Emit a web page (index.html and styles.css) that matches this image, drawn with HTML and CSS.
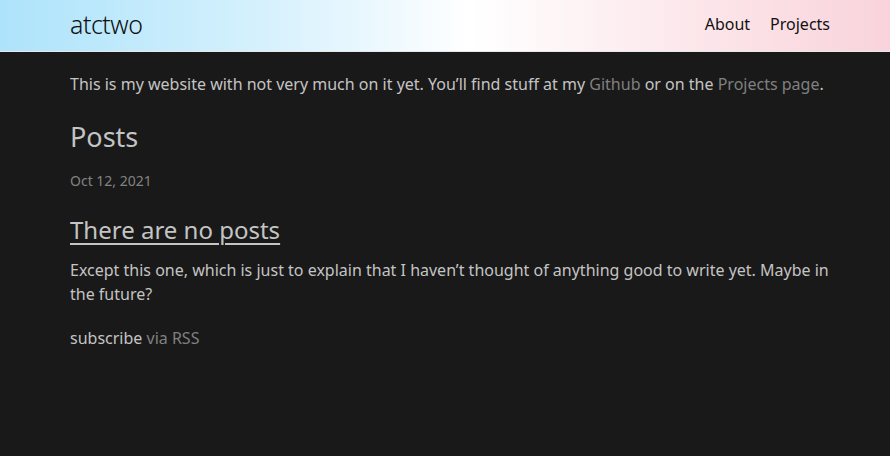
FILE: index.html
```html
<!DOCTYPE html>
<html lang="en">
<head>
<meta charset="utf-8">
<title>atctwo</title>
<link rel="stylesheet" href="styles.css">
</head>
<body>
<header class="site-header">
  <div class="wrapper header-inner">
    <a class="site-title" href="#">atctwo</a>
    <nav class="site-nav">
      <a class="page-link" href="#">About</a>
      <a class="page-link" href="#">Projects</a>
    </nav>
  </div>
</header>
<main class="page-content">
  <div class="wrapper">
    <p class="intro">This is my website with not very much on it yet. You’ll find stuff at my <a class="muted-link" href="#">Github</a> or on the <a class="muted-link" href="#">Projects page</a>.</p>
    <h2 class="post-list-heading">Posts</h2>
    <ul class="post-list">
      <li>
        <span class="post-meta">Oct 12, 2021</span>
        <h3 class="post-title"><a class="post-link" href="#">There are no posts</a></h3>
        <p class="excerpt">Except this one, which is just to explain that I haven’t thought of anything good to write yet. Maybe in the future?</p>
      </li>
    </ul>
    <p class="rss-subscribe">subscribe <a class="muted-link" href="#">via RSS</a></p>
  </div>
</main>
</body>
</html>
```

FILE: styles.css
```css
* { box-sizing: border-box; }
html, body { margin: 0; padding: 0; }
body {
  background: #191919;
  color: #c4c4c4;
  font-family: "Noto Sans", "Open Sans", sans-serif;
  font-size: 16px;
  line-height: 1.5;
  min-height: 456px;
}
.wrapper {
  padding: 0 60px 0 70px;
}
.site-header {
  height: 52px;
  background: linear-gradient(90deg, #ade3fb 0%, #d6f1fd 30%, #ffffff 53%, #fdeef1 70%, #f9d3db 100%);
  border-bottom: 1px solid #e8e8e8;
}
.header-inner {
  display: flex;
  justify-content: space-between;
  align-items: center;
  height: 51px;
  padding-bottom: 4px;
}
.site-title {
  font-size: 25px;
  font-weight: 300;
  letter-spacing: -0.5px;
  color: #111;
  text-decoration: none;
  line-height: 1.2;
}
.site-nav {
  display: flex;
  gap: 20px;
}
.page-link {
  color: #111;
  text-decoration: none;
  font-size: 16px;
}
.page-content {
  padding-top: 20px;
}
.intro { margin: 0 0 23px; }
.muted-link { color: #808080; text-decoration: none; }
.post-list-heading {
  font-size: 27px;
  font-weight: 400;
  margin: 0 0 16px;
  line-height: 1.3;
}
.post-list { list-style: none; margin: 0; padding: 0; }
.post-meta {
  display: block;
  font-size: 14px;
  color: #828282;
  margin-bottom: 23px;
}
.post-title {
  margin: 0 0 13px;
  font-size: 24px;
  font-weight: 400;
  line-height: 1.3;
}
.post-link { color: #c4c4c4; text-decoration: underline; text-underline-offset: 4px; text-decoration-thickness: 2px; }
.excerpt { margin: 0 0 20px; }
.rss-subscribe { margin: 0; }
```
